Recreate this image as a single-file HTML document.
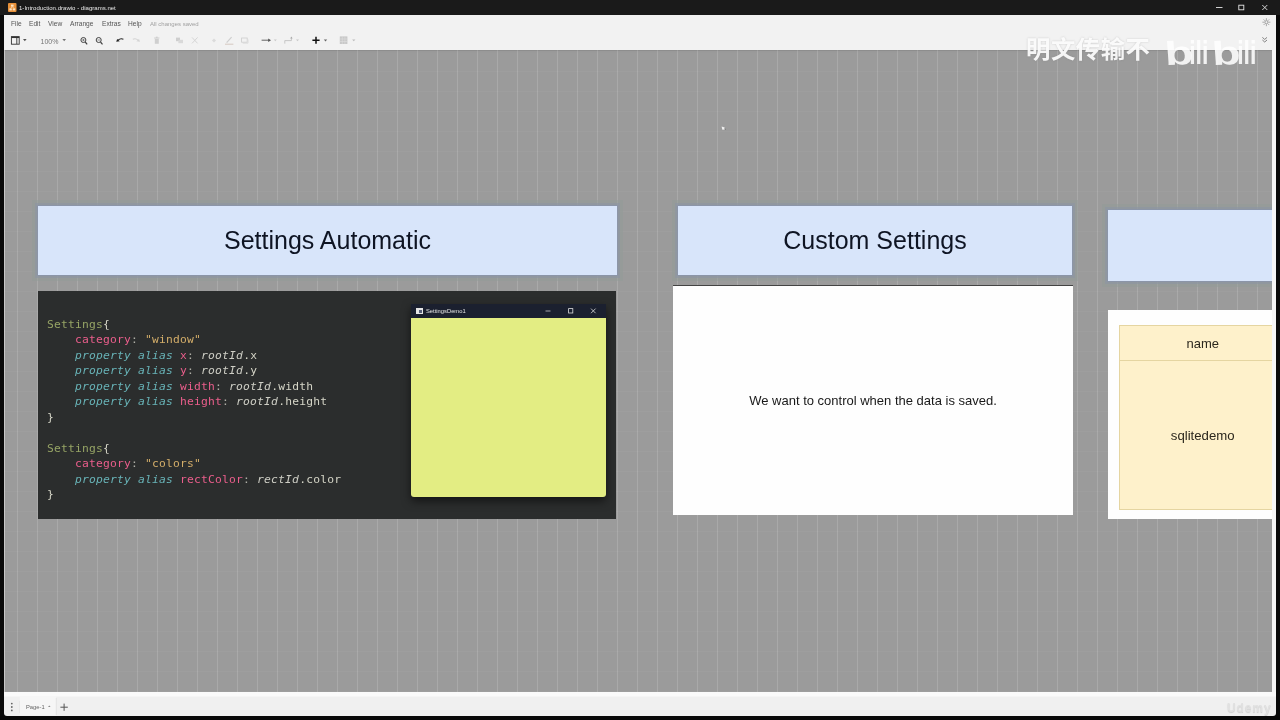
<!DOCTYPE html>
<html lang="en">
<head>
<meta charset="utf-8">
<title>1-Introduction.drawio - diagrams.net</title>
<style>
html,body{margin:0;padding:0;}
body{width:1280px;height:720px;overflow:hidden;background:#0a0a0a;position:relative;font-family:"Liberation Sans","Noto Sans CJK SC",sans-serif;}
.abs{position:absolute;}
#titlebar{left:0;top:0;width:1280px;height:15px;background:#1b1b1b;}
#titlebar .ttl{left:19px;top:3.7px;font-size:6.05px;line-height:9px;color:#e8e8e8;white-space:nowrap;}
#appicon{left:8px;top:3px;width:8px;height:9px;background:#e8913a;border-radius:1px;}
#chrome{left:4px;top:15px;width:1272px;height:35px;background:#f3f3f3;}
.menu{top:19px;font-size:6.6px;line-height:9px;color:#555;white-space:nowrap;}
#canvas{left:4px;top:50px;width:1267.5px;height:642px;background-color:#9c9c9c;
 background-image:
  linear-gradient(to right, rgba(255,255,255,0.14) 1px, transparent 1px),
  linear-gradient(to bottom, rgba(255,255,255,0.035) 1px, transparent 1px);
 background-size:20px 20px;background-position:13px 1px;overflow:hidden;box-shadow:inset 1px 0 0 rgba(255,255,255,0.45), inset 0 2px 2px -1px rgba(0,0,0,0.12);}
#vscroll{left:1271.5px;top:50px;width:4.5px;height:642px;background:#f7f7f7;}
#bottombar{left:4px;top:692px;width:1272px;height:24px;border-radius:0 0 3px 3px;background:#f1f1f1;}
.blue{background:#d9e6fb;box-shadow:0 0 0 1px rgba(140,150,170,0.9),0 0 0 3px rgba(140,150,165,0.55),0 0 0 6px rgba(146,156,152,0.5);box-sizing:border-box;color:#0f1524;font-size:25px;padding-top:0.3px;text-align:center;}
.white{background:#fff;}
#code{left:38px;top:291px;width:578px;height:227.5px;background:#2c2e2e;}
pre{margin:0;font-family:"DejaVu Sans Mono","Liberation Mono",monospace;font-size:11.3px;line-height:15.5px;letter-spacing:0.2px;color:#d6d6c8;position:absolute;left:47px;top:316.6px;}
.g{color:#97a566}.p{color:#ec5f8d}.s{color:#d4ae6a}.t{color:#69b4b8;font-style:italic}.i{color:#cfcfc6;font-style:italic}.c{color:#b0b0a8}
#win{left:411px;top:304px;width:194.6px;height:193px;border-radius:0 0 3px 3px;background:#e4ee84;box-shadow:0 4px 10px rgba(0,0,0,0.55);overflow:hidden;}
#wintitle{left:0;top:0;width:195px;height:14px;background:#1c2130;}
</style>
</head>
<body>
<div id="root" style="position:absolute;left:0;top:0;width:1280px;height:720px;overflow:hidden;will-change:transform;opacity:0.9999;">
<div id="titlebar" class="abs">
    <div class="ttl abs">1-Introduction.drawio - diagrams.net</div>
</div>
<div id="chrome" class="abs"></div>
<div class="menu abs" style="left:11px">File</div>
<div class="menu abs" style="left:29px">Edit</div>
<div class="menu abs" style="left:48px">View</div>
<div class="menu abs" style="left:70px">Arrange</div>
<div class="menu abs" style="left:102px">Extras</div>
<div class="menu abs" style="left:128px">Help</div>
<div class="menu abs" style="left:150px;top:19.5px;color:#a2a2a2;font-size:6px">All changes saved</div>


<svg class="abs" style="left:0;top:0" width="1280" height="52" viewBox="0 0 1280 52">
  <!-- app icon -->
  <rect x="8" y="3" width="8.5" height="9" rx="1" fill="#e8913a"/>
  <rect x="11" y="4.6" width="2.6" height="2" fill="#fbe3c6"/>
  <rect x="9.4" y="8.4" width="2.4" height="2" fill="#fbe3c6"/>
  <rect x="12.8" y="8.4" width="2.4" height="2" fill="#fbe3c6"/>
  <path d="M12.3 6.6 L10.6 8.4 M12.3 6.6 L14 8.4" stroke="#fbe3c6" stroke-width="0.7" fill="none"/>
  <!-- window buttons -->
  <path d="M1216 7.5 H1222.5" stroke="#e6e6e6" stroke-width="0.9"/>
  <rect x="1238.8" y="5.2" width="5" height="4.6" fill="none" stroke="#e6e6e6" stroke-width="0.9"/>
  <path d="M1262.3 5 L1267.3 10 M1267.3 5 L1262.3 10" stroke="#e6e6e6" stroke-width="0.9"/>
  <!-- format panel icon -->
  <rect x="11.4" y="36.6" width="7.8" height="7.6" fill="none" stroke="#333" stroke-width="0.9"/>
  <path d="M11.4 37.4 H19.2" stroke="#333" stroke-width="1.3"/>
  <path d="M16.8 37 V44" stroke="#333" stroke-width="0.9"/>
  <path d="M23 39 h3.6 l-1.8 2.2 z" fill="#555"/>
  <path d="M62.4 39 h3.6 l-1.8 2.2 z" fill="#777"/>
  <!-- zoom in -->
  <circle cx="83.4" cy="40" r="2.5" fill="none" stroke="#444" stroke-width="1"/>
  <path d="M85.2 42 L87.2 44.3" stroke="#444" stroke-width="1.2"/>
  <path d="M82.2 40 h2.4 M83.4 38.8 v2.4" stroke="#444" stroke-width="0.6"/>
  <!-- zoom out -->
  <circle cx="98.7" cy="40" r="2.5" fill="none" stroke="#444" stroke-width="1"/>
  <path d="M100.5 42 L102.5 44.3" stroke="#444" stroke-width="1.2"/>
  <path d="M97.5 40 h2.4" stroke="#444" stroke-width="0.6"/>
  <!-- undo -->
  <path d="M123.4 39.2 C121.4 38.4 119.4 38.9 118.2 40.2" stroke="#222" stroke-width="1.1" fill="none"/><path d="M116.2 41.8 L117.2 38.9 L119.8 41.2 Z" fill="#222"/>
  <!-- redo -->
  <path d="M132.8 39.2 C134.8 38.4 136.8 38.9 138 40.2" stroke="#d4d4d4" stroke-width="1.1" fill="none"/><path d="M140 41.8 L139 38.9 L136.4 41.2 Z" fill="#d4d4d4"/>
  <!-- delete -->
  <path d="M154.2 38 h5.2 M155.9 37.2 h1.8" stroke="#c4c4c4" stroke-width="0.8"/>
  <rect x="154.8" y="38.8" width="4" height="5" fill="#d0d0d0"/>
  <!-- to front / to back -->
  <rect x="176" y="37.6" width="4" height="3.6" fill="#cfcfcf"/>
  <rect x="178.4" y="39.8" width="4.6" height="3.4" fill="#dadada"/>
  <path d="M192 37.4 L197.6 43.4 M197.6 37.4 L192 43.4" stroke="#d2d2d2" stroke-width="0.9"/>
  <!-- fill -->
  <path d="M212 40.4 l2-2 2 2 -2 2z" fill="#dcdcdc"/>
  <!-- line color -->
  <path d="M226.6 42.6 L231.6 37.2" stroke="#cfcfcf" stroke-width="1.2"/>
  <path d="M225 44.2 H233.4" stroke="#d2c4bc" stroke-width="0.9"/>
  <!-- shadow -->
  <rect x="241.6" y="38" width="5.6" height="4.2" fill="none" stroke="#cdcdcd" stroke-width="0.8"/>
  <path d="M242.8 43.2 H248 V39.4" stroke="#dcdcdc" stroke-width="0.9" fill="none"/>
  <!-- connection -->
  <path d="M261.6 40.2 H269.4" stroke="#555" stroke-width="0.9"/>
  <path d="M268.2 38.4 L271 40.2 L268.2 42 Z" fill="#555"/>
  <path d="M273.8 39.4 h3 l-1.5 1.9 z" fill="#c8c8c8"/>
  <!-- waypoints -->
  <path d="M284.8 43.6 V40.6 H291.4 V37.4" stroke="#bdbdbd" stroke-width="0.8" fill="none"/>
  <path d="M290.2 38.6 L291.4 36.6 L292.6 38.6Z" fill="#aaa"/>
  <path d="M296 39.4 h3 l-1.5 1.9 z" fill="#c8c8c8"/>
  <!-- plus -->
  <path d="M312.4 40.3 H319.6 M316 36.8 V43.8" stroke="#111" stroke-width="1.5"/>
  <path d="M323.8 39.4 h3.4 l-1.7 2 z" fill="#666"/>
  <!-- table -->
  <rect x="339.8" y="36.4" width="7.6" height="7.6" fill="#c9c9c9"/>
  <path d="M342.3 36.4 V44 M344.9 36.4 V44 M339.8 39 H347.4 M339.8 41.5 H347.4" stroke="#e2e2e2" stroke-width="0.5"/>
  <path d="M352.2 39.4 h3.2 l-1.6 1.9 z" fill="#bbb"/>
  <!-- sun -->
  <g stroke="#777" stroke-width="0.6" fill="none">
    <circle cx="1266.4" cy="22.2" r="1.5"/>
    <path d="M1266.4 18.2 v2 M1266.4 24.2 v2 M1262.4 22.2 h2 M1268.4 22.2 h2 M1263.6 19.4 l1.4 1.4 M1267.8 23.6 l1.4 1.4 M1269.2 19.4 l-1.4 1.4 M1265 23.6 l-1.4 1.4"/>
  </g>
  <!-- collapse chevrons -->
  <path d="M1262.4 37.4 L1264.7 39.4 L1267 37.4 M1262.4 40 L1264.7 42 L1267 40" stroke="#666" stroke-width="0.8" fill="none"/>
</svg>
<div class="abs" style="left:40.5px;top:37px;font-size:7px;line-height:9px;color:#777;white-space:nowrap;">100%</div>

<div id="canvas" class="abs"></div>

<div class="abs" style="left:4px;top:50px;width:1267.5px;height:642px;overflow:hidden;">
<div class="abs" style="left:-4px;top:-50px;width:1280px;height:720px;">
<div class="abs blue" style="left:38px;top:206px;width:579px;height:69px;line-height:69px;">Settings Automatic</div>
<div class="abs blue" style="left:678px;top:206px;width:394px;height:69px;line-height:69px;">Custom Settings</div>
<div class="abs blue" style="left:1108px;top:210px;width:168px;height:70.5px;"></div>

<div id="code" class="abs"></div>
<pre><span class="g">Settings</span>{
    <span class="p">category</span><span class="c">:</span> <span class="s">"window"</span>
    <span class="t">property alias</span> <span class="p">x</span><span class="c">:</span> <span class="i">rootId</span>.x
    <span class="t">property alias</span> <span class="p">y</span><span class="c">:</span> <span class="i">rootId</span>.y
    <span class="t">property alias</span> <span class="p">width</span><span class="c">:</span> <span class="i">rootId</span>.width
    <span class="t">property alias</span> <span class="p">height</span><span class="c">:</span> <span class="i">rootId</span>.height
}

<span class="g">Settings</span>{
    <span class="p">category</span><span class="c">:</span> <span class="s">"colors"</span>
    <span class="t">property alias</span> <span class="p">rectColor</span><span class="c">:</span> <span class="i">rectId</span>.color
}</pre>
<div id="win" class="abs">
  <div id="wintitle" class="abs"></div>
  <div class="abs" style="left:5px;top:4px;width:7px;height:6px;background:#e6e6e6;"></div><div class="abs" style="left:8.2px;top:5.6px;width:3px;height:3.6px;background:#59607a;"></div>
  <div class="abs" style="left:15px;top:3px;font-size:5.8px;line-height:8px;color:#e4e4e4;white-space:nowrap;">SettingsDemo1</div>
  <svg class="abs" style="left:0;top:0" width="195" height="14" viewBox="0 0 195 14">
    <path d="M134.5 7 H139.5" stroke="#e0e0e0" stroke-width="0.7"/>
    <rect x="157.6" y="4.6" width="4.2" height="4.4" fill="none" stroke="#e0e0e0" stroke-width="0.8"/>
    <path d="M180 4.6 L184.6 9.2 M184.6 4.6 L180 9.2" stroke="#e0e0e0" stroke-width="0.8"/>
  </svg>
</div>

<div class="abs white" style="left:673px;top:285px;width:399.5px;height:230px;border-top:1px solid #444;box-sizing:border-box;"></div>
<div class="abs" style="left:673px;top:393px;width:400px;text-align:center;font-size:13px;line-height:16px;color:#1a1a1a;">We want to control when the data is saved.</div>

<div class="abs white" style="left:1108px;top:310px;width:164px;height:209px;"></div>
<div class="abs" style="left:1119px;top:325px;width:153px;height:185px;background:#fff2cc;border:1px solid #e6d6a2;border-right:none;box-sizing:border-box;"></div>
<div class="abs" style="left:1119px;top:360px;width:153px;height:1px;background:#e6d6a2;"></div>
<div class="abs" style="left:1142.7px;top:335.5px;width:120px;text-align:center;font-size:13px;line-height:16px;color:#2c281e;">name</div>
<div class="abs" style="left:1142.7px;top:428px;width:120px;text-align:center;font-size:13.2px;line-height:16px;color:#2c281e;">sqlitedemo</div>
</div>
</div>

<svg class="abs" style="left:720px;top:125px" width="8" height="8" viewBox="0 0 8 8"><path d="M1.6 1.4 L4.6 2.6 L4.8 4.6 L2.4 4.8 Z" fill="#f2f2f2"/><path d="M4.8 3.4 L5.4 4.8" stroke="#555" stroke-width="0.6"/></svg>
<div id="vscroll" class="abs"></div>
<div id="bottombar" class="abs"></div>
<div class="abs" style="z-index:5;left:26px;top:702.5px;font-size:5.8px;line-height:9px;color:#666;">Page-1</div>

<div class="abs" style="left:1026px;top:35px;font-size:24.4px;line-height:30px;letter-spacing:0.5px;font-weight:700;color:rgba(255,255,255,0.92);text-shadow:0 0 2px rgba(120,120,120,0.35);white-space:nowrap;font-family:'Liberation Sans','Noto Sans CJK SC',sans-serif;">明文传输不</div>
<svg class="abs" style="left:1160px;top:28px" width="104" height="42" viewBox="0 0 104 42">
  <g font-family="'Liberation Sans',sans-serif" font-weight="bold" font-size="33" fill="rgba(255,255,255,0.88)">
    <text transform="translate(5.4,37) scale(1.42,1) rotate(-3)">b</text>
    <text transform="translate(29.2,35.5) scale(0.7,1)">ili</text>
    <text transform="translate(52.8,37) scale(1.42,1) rotate(-3)">b</text>
    <text transform="translate(77.2,35.5) scale(0.7,1)">ili</text>
  </g>
</svg>
<svg class="abs" style="left:0;top:692px" width="1280" height="28" viewBox="0 0 1280 28">
  <rect x="4" y="0" width="1272" height="4.5" fill="#fbfbfb"/>
  <rect x="19.8" y="4.5" width="36.2" height="19" fill="#f7f7f7"/>
  <circle cx="11.8" cy="11.6" r="0.9" fill="#666"/><circle cx="11.8" cy="15" r="0.9" fill="#666"/><circle cx="11.8" cy="18.4" r="0.9" fill="#666"/>
  <path d="M19.5 9 V21" stroke="#e2e2e2" stroke-width="0.6"/>
  <path d="M56.3 6 V23" stroke="#e0e0e0" stroke-width="0.7"/>
  <path d="M48 15 h2.6 l-1.3 -1.6 z" fill="#888"/>
  <path d="M60.4 15.2 H67.8 M64.1 11.6 V18.8" stroke="#555" stroke-width="1"/>
</svg>
<div class="abs" style="left:1227px;top:701px;font-size:12px;line-height:14px;font-weight:bold;color:#e2e2e2;letter-spacing:0.9px;text-shadow:0 1px 1px #cfcfcf;">Udemy</div>
<div class="abs" style="left:0;top:716px;width:1280px;height:4px;background:#0a0a0a;"></div>
</div>
</body>
</html>
